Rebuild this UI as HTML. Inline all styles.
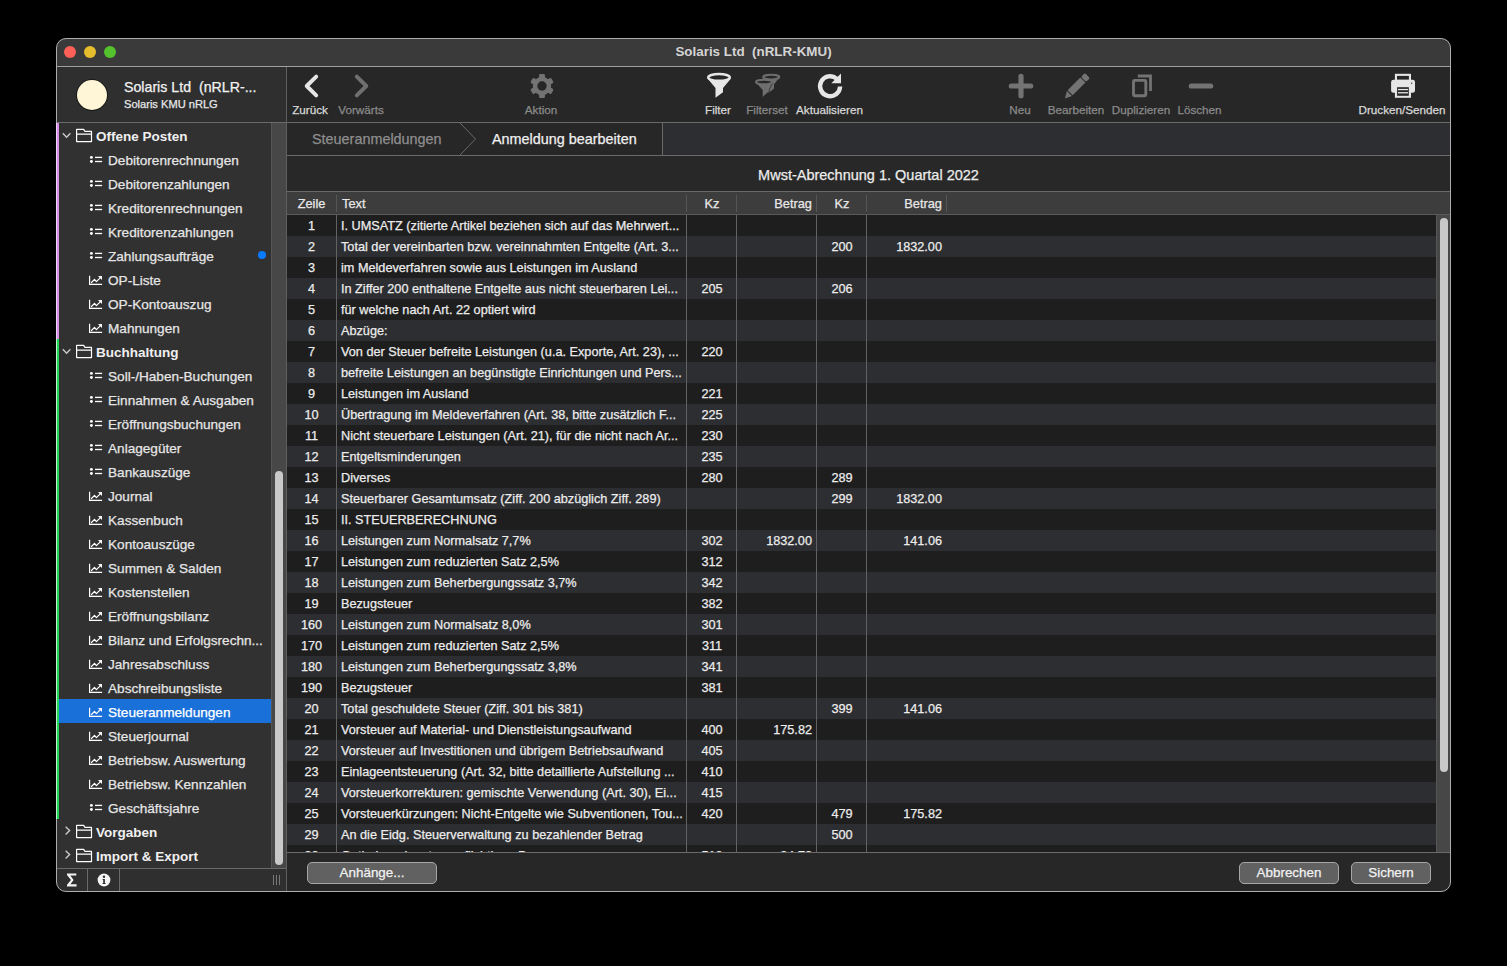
<!DOCTYPE html>
<html><head><meta charset="utf-8">
<style>
*{margin:0;padding:0;box-sizing:border-box}
html,body{width:1507px;height:966px;background:#000;overflow:hidden;font-family:"Liberation Sans",sans-serif;color:#e8e8e8}
.row,.srow .it,.th,.btn,.crumbtxt,#mtitle,.tbl,.hdrt{-webkit-text-stroke:0.25px currentColor}
.abs{position:absolute}
#win{position:absolute;left:56px;top:38px;width:1395px;height:854px;border-radius:10px;background:#2b2b2b;overflow:hidden}
#winborder{position:absolute;left:56px;top:38px;width:1395px;height:854px;border-radius:10px;border:1px solid #adadad;pointer-events:none;z-index:50}
.hl{position:absolute;height:1px;background:#6a6a6a}
.vl{position:absolute;width:1px;background:#6a6a6a}
#titlebar{left:57px;top:39px;width:1393px;height:27px;background:#3a3a3a}
.tl{position:absolute;width:12.5px;height:12.5px;border-radius:50%;top:45.6px}
#title{position:absolute;left:57px;width:1393px;top:44px;text-align:center;font-weight:bold;font-size:13.4px;color:#d4d4d4;letter-spacing:0}
#shead{left:57px;top:67px;width:229px;height:55px;background:#2f2f2f}
#toolbar{left:287px;top:67px;width:1163px;height:55px;background:#272727}
.tbl{position:absolute;top:103px;font-size:11.7px;text-align:center;width:120px;margin-left:-60px;white-space:nowrap}
#sidebar{left:57px;top:123px;width:214px;height:745px;background:#313131;overflow:hidden}
.srow{position:absolute;left:57px;width:214px;height:24px}
.srow.sel{background:#1a70d9}
.srow .ic{position:absolute;left:32px;top:7px}
.srow .it{position:absolute;left:51px;top:6px;font-size:13.6px;color:#e6e6e6;white-space:nowrap}
.srow.sel .it{color:#fff}
.srow .chev{position:absolute;left:5px;top:9px}
.srow.closed .chev{left:7px;top:7px}
.srow .fold{position:absolute;left:19px;top:5px}
.srow .gt{position:absolute;left:39px;top:6px;font-size:13.5px;font-weight:bold;color:#f0f0f0;white-space:nowrap}
#strack{left:271px;top:123px;width:15px;height:745px;background:#474747;border-left:1px solid #565656}
#sthumb{left:275px;top:471px;width:8px;height:394px;border-radius:4px;background:#c9c9c9}
#sbot{left:57px;top:869px;width:229px;height:22px;background:#2f2f2f}
#crumb{left:287px;top:123px;width:1163px;height:32px;background:#2d2e31}
#crumbA{left:287px;top:123px;width:375px;height:32px;background:#272727}
.crumbtxt{position:absolute;top:131px;font-size:14.4px;white-space:nowrap}
#titlearea{left:287px;top:156px;width:1163px;height:35px;background:#282828}
#mtitle{position:absolute;left:287px;width:1163px;top:167px;text-align:center;font-size:14.5px;color:#ececec}
#thead{left:287px;top:192px;width:1163px;height:22px;background:#3d3d3d}
.th{position:absolute;top:196px;font-size:12.8px;color:#e8e8e8;white-space:nowrap}
.thd{position:absolute;top:195px;width:1px;height:17px;background:#555}
#tbody{left:287px;top:215px;width:1149px;height:637px;overflow:hidden}
.row{position:absolute;left:0;width:1149px;height:21px;font-size:12.7px;color:#ececec;white-space:nowrap}
.rd{background:#1e1e1e}
.rl{background:#2d2e31}
.row span{position:absolute;top:4px}
.c0{left:0;width:49px;text-align:center}
.c1{left:54px}
.c2{left:400px;width:50px;text-align:center}
.c3{left:450px;width:75px;text-align:right}
.c4{left:530px;width:50px;text-align:center}
.c5{left:580px;width:75px;text-align:right}
.bd{position:absolute;top:215px;width:1px;height:637px;background:#626262}
#ttrack{left:1436px;top:215px;width:14px;height:637px;background:#474747;border-left:1px solid #565656}
#tthumb{left:1440px;top:218px;width:8px;height:554px;border-radius:4px;background:#c9c9c9}
#mbot{left:287px;top:853px;width:1163px;height:38px;background:#272727}
.btn{position:absolute;top:862px;height:22px;border-radius:5px;background:#616161;border:1px solid #a6a6a6;font-size:13.4px;color:#f2f2f2;text-align:center;line-height:19px;white-space:nowrap}
</style></head><body>
<div id="clip" style="position:absolute;left:0;top:0;width:1507px;height:966px;clip-path:inset(38px 56px 74px 56px round 10px)">
<div id="win"></div>
<!-- title bar -->
<div id="titlebar" class="abs"></div>
<div class="tl" style="left:63.8px;background:#fe5f57"></div>
<div class="tl" style="left:83.8px;background:#e6bd2c"></div>
<div class="tl" style="left:103.8px;background:#53c22d"></div>
<div id="title">Solaris Ltd&nbsp; (nRLR-KMU)</div>
<div class="hl" style="left:57px;top:66px;width:1393px;background:#a0a0a0"></div>

<!-- sidebar header -->
<div id="shead" class="abs"></div>
<div class="abs" style="left:76.75px;top:79.75px;width:30.5px;height:30.5px;border-radius:50%;background:#fef6d6;box-shadow:0 0 0 1px #1a1a1a"></div>
<div class="abs hdrt" style="left:124px;top:79px;font-size:14.2px;color:#f2f2f2;white-space:nowrap">Solaris Ltd&nbsp; (nRLR-...</div>
<div class="abs hdrt" style="left:124px;top:98px;font-size:11.1px;color:#e8e8e8;white-space:nowrap">Solaris KMU nRLG</div>

<!-- toolbar -->
<div id="toolbar" class="abs"></div>
<svg class="abs" style="left:287px;top:67px" width="1163" height="55" viewBox="287 67 1163 55">
  <!-- back -->
  <path d="M316.2 76.6L306.7 86L316.2 95.4" stroke="#e6e6e6" stroke-width="3.9" fill="none" stroke-linecap="round" stroke-linejoin="round"/>
  <path d="M356.8 76.6L366.3 86L356.8 95.4" stroke="#707070" stroke-width="3.9" fill="none" stroke-linecap="round" stroke-linejoin="round"/>
  <!-- gear -->
  <g transform="translate(542 86)" fill="#737373">
    <circle r="9.2"/>
    <rect x="-2.9" y="-11.9" width="5.8" height="23.8" rx="1.2"/>
    <rect x="-2.9" y="-11.9" width="5.8" height="23.8" rx="1.2" transform="rotate(60)"/>
    <rect x="-2.9" y="-11.9" width="5.8" height="23.8" rx="1.2" transform="rotate(120)"/>
    <circle r="4.7" fill="#272727"/>
  </g>
  <!-- filter -->
  <g>
    <path d="M707.5 78.5L715.5 88V97.8L723 92.3V88L731 78.5Z" fill="#e6e6e6"/>
    <ellipse cx="719" cy="77.4" rx="10.8" ry="3.4" stroke="#e6e6e6" stroke-width="2.4" fill="#272727"/>
  </g>
  <!-- filterset -->
  <g fill="#6e6e6e">
    <path d="M763 78L768.5 85V93L774 88.5V84.5L779.5 77Z"/>
    <ellipse cx="771.2" cy="77.1" rx="8.1" ry="2.3" stroke="#6e6e6e" stroke-width="1.9" fill="#272727"/>
    <path d="M756 83L762.3 90V97.4L769.3 91.5V89.5L772.5 83Z" stroke="#272727" stroke-width="0.7"/>
    <ellipse cx="764" cy="82" rx="8.1" ry="2.3" stroke="#6e6e6e" stroke-width="1.9" fill="#272727"/>
  </g>
  <!-- refresh -->
  <path d="M840.1 86.5A10 10 0 1 1 836.6 78.6" stroke="#e6e6e6" stroke-width="4.4" fill="none"/>
  <path d="M841 73.6V83.2H831.3Z" fill="#e6e6e6"/>
  <!-- plus -->
  <path d="M1021 76.3V95.7M1011.3 86H1030.7" stroke="#737373" stroke-width="5.2" stroke-linecap="round"/>
  <!-- pencil -->
  <g transform="translate(1076.8 86.1) rotate(-45)" fill="#737373">
    <rect x="-9.4" y="-3.6" width="18" height="7.2"/>
    <rect x="9.6" y="-3.6" width="5.4" height="7.2" rx="1.6"/>
    <path d="M-10.4 -3.6L-10.4 3.6L-17.2 0.4Z"/>
  </g>
  <!-- duplicate -->
  <path d="M1137.8 76H1150.5V91" stroke="#737373" stroke-width="2.8" fill="none"/>
  <rect x="1133.5" y="80.4" width="12.3" height="15.4" stroke="#737373" stroke-width="2.9" fill="none" rx="1"/>
  <!-- minus -->
  <path d="M1191.3 86H1210.7" stroke="#737373" stroke-width="5.2" stroke-linecap="round"/>
  <!-- printer -->
  <g fill="#e6e6e6">
    <rect x="1395.95" y="74.85" width="14" height="6" stroke="#e6e6e6" stroke-width="2.1" fill="none"/>
    <rect x="1391.1" y="79.8" width="23.9" height="13" rx="2.4"/>
    <rect x="1394.9" y="85.9" width="16.1" height="11.9" fill="#e6e6e6"/>
    <rect x="1397.1" y="87.2" width="11.7" height="8.6" fill="#272727"/>
    <rect x="1398" y="88.9" width="10" height="1.3" fill="#e6e6e6"/>
    <rect x="1398" y="92.1" width="10" height="1.3" fill="#e6e6e6"/>
    <circle cx="1411.6" cy="83.2" r="0.75" fill="#444"/>
  </g>
</svg>
<div class="tbl" style="left:310px;color:#d8d8d8">Zurück</div>
<div class="tbl" style="left:361px;color:#8a8a8a">Vorwärts</div>
<div class="tbl" style="left:541px;color:#8a8a8a">Aktion</div>
<div class="tbl" style="left:718px;color:#d8d8d8">Filter</div>
<div class="tbl" style="left:767px;color:#8a8a8a">Filterset</div>
<div class="tbl" style="left:829.5px;color:#d8d8d8">Aktualisieren</div>
<div class="tbl" style="left:1020px;color:#8a8a8a">Neu</div>
<div class="tbl" style="left:1076px;color:#8a8a8a">Bearbeiten</div>
<div class="tbl" style="left:1141px;color:#8a8a8a">Duplizieren</div>
<div class="tbl" style="left:1199.5px;color:#8a8a8a">Löschen</div>
<div class="tbl" style="left:1402px;color:#d8d8d8">Drucken/Senden</div>
<div class="hl" style="left:57px;top:122px;width:1393px;background:#6a6a6a"></div>
<div class="vl" style="left:286px;top:67px;height:824px;background:#5f5f5f"></div>

<!-- sidebar -->
<div id="sidebar" class="abs"></div>
<div class="srow grp open" style="top:123px"><svg class="chev" width="10" height="7" viewBox="0 0 10 7"><path d="M0.8 1.2L4.6 5.2L8.4 1.2" stroke="#c8c8c8" stroke-width="1.4" fill="none"/></svg><svg class="fold" width="18" height="15" viewBox="0 0 18 15"><path d="M0.6 1.4H7.6L9 3.4H15.5V13.6H0.6Z M0.6 6.2H15.5" stroke="#fff" stroke-width="1.2" fill="none" stroke-linejoin="round"/></svg><span class="gt">Offene Posten</span></div>
<div class="srow item" style="top:147px"><svg class="ic" width="16" height="12" viewBox="0 0 16 12"><circle cx="2.4" cy="3.4" r="1.45" fill="#fff"/><circle cx="2.4" cy="7.5" r="1.45" fill="#fff"/><rect x="6" y="2.75" width="7.1" height="1.3" fill="#fff"/><rect x="6" y="6.85" width="7.1" height="1.3" fill="#fff"/></svg><span class="it">Debitorenrechnungen</span></div>
<div class="srow item" style="top:171px"><svg class="ic" width="16" height="12" viewBox="0 0 16 12"><circle cx="2.4" cy="3.4" r="1.45" fill="#fff"/><circle cx="2.4" cy="7.5" r="1.45" fill="#fff"/><rect x="6" y="2.75" width="7.1" height="1.3" fill="#fff"/><rect x="6" y="6.85" width="7.1" height="1.3" fill="#fff"/></svg><span class="it">Debitorenzahlungen</span></div>
<div class="srow item" style="top:195px"><svg class="ic" width="16" height="12" viewBox="0 0 16 12"><circle cx="2.4" cy="3.4" r="1.45" fill="#fff"/><circle cx="2.4" cy="7.5" r="1.45" fill="#fff"/><rect x="6" y="2.75" width="7.1" height="1.3" fill="#fff"/><rect x="6" y="6.85" width="7.1" height="1.3" fill="#fff"/></svg><span class="it">Kreditorenrechnungen</span></div>
<div class="srow item" style="top:219px"><svg class="ic" width="16" height="12" viewBox="0 0 16 12"><circle cx="2.4" cy="3.4" r="1.45" fill="#fff"/><circle cx="2.4" cy="7.5" r="1.45" fill="#fff"/><rect x="6" y="2.75" width="7.1" height="1.3" fill="#fff"/><rect x="6" y="6.85" width="7.1" height="1.3" fill="#fff"/></svg><span class="it">Kreditorenzahlungen</span></div>
<div class="srow item" style="top:243px"><svg class="ic" width="16" height="12" viewBox="0 0 16 12"><circle cx="2.4" cy="3.4" r="1.45" fill="#fff"/><circle cx="2.4" cy="7.5" r="1.45" fill="#fff"/><rect x="6" y="2.75" width="7.1" height="1.3" fill="#fff"/><rect x="6" y="6.85" width="7.1" height="1.3" fill="#fff"/></svg><span class="it">Zahlungsaufträge</span></div>
<div class="srow item" style="top:267px"><svg class="ic" width="16" height="13" viewBox="0 0 16 13"><path d="M0.55 1.8V10.45H13.1" stroke="#fff" stroke-width="1.3" fill="none"/><path d="M2.5 8.5L5.5 5.3L7.4 7.6L11.4 3.6" stroke="#fff" stroke-width="1.2" fill="none" stroke-linecap="round" stroke-linejoin="round"/><path d="M9 2H13V6Z" fill="#fff"/></svg><span class="it">OP-Liste</span></div>
<div class="srow item" style="top:291px"><svg class="ic" width="16" height="13" viewBox="0 0 16 13"><path d="M0.55 1.8V10.45H13.1" stroke="#fff" stroke-width="1.3" fill="none"/><path d="M2.5 8.5L5.5 5.3L7.4 7.6L11.4 3.6" stroke="#fff" stroke-width="1.2" fill="none" stroke-linecap="round" stroke-linejoin="round"/><path d="M9 2H13V6Z" fill="#fff"/></svg><span class="it">OP-Kontoauszug</span></div>
<div class="srow item" style="top:315px"><svg class="ic" width="16" height="13" viewBox="0 0 16 13"><path d="M0.55 1.8V10.45H13.1" stroke="#fff" stroke-width="1.3" fill="none"/><path d="M2.5 8.5L5.5 5.3L7.4 7.6L11.4 3.6" stroke="#fff" stroke-width="1.2" fill="none" stroke-linecap="round" stroke-linejoin="round"/><path d="M9 2H13V6Z" fill="#fff"/></svg><span class="it">Mahnungen</span></div>
<div class="srow grp open" style="top:339px"><svg class="chev" width="10" height="7" viewBox="0 0 10 7"><path d="M0.8 1.2L4.6 5.2L8.4 1.2" stroke="#c8c8c8" stroke-width="1.4" fill="none"/></svg><svg class="fold" width="18" height="15" viewBox="0 0 18 15"><path d="M0.6 1.4H7.6L9 3.4H15.5V13.6H0.6Z M0.6 6.2H15.5" stroke="#fff" stroke-width="1.2" fill="none" stroke-linejoin="round"/></svg><span class="gt">Buchhaltung</span></div>
<div class="srow item" style="top:363px"><svg class="ic" width="16" height="12" viewBox="0 0 16 12"><circle cx="2.4" cy="3.4" r="1.45" fill="#fff"/><circle cx="2.4" cy="7.5" r="1.45" fill="#fff"/><rect x="6" y="2.75" width="7.1" height="1.3" fill="#fff"/><rect x="6" y="6.85" width="7.1" height="1.3" fill="#fff"/></svg><span class="it">Soll-/Haben-Buchungen</span></div>
<div class="srow item" style="top:387px"><svg class="ic" width="16" height="12" viewBox="0 0 16 12"><circle cx="2.4" cy="3.4" r="1.45" fill="#fff"/><circle cx="2.4" cy="7.5" r="1.45" fill="#fff"/><rect x="6" y="2.75" width="7.1" height="1.3" fill="#fff"/><rect x="6" y="6.85" width="7.1" height="1.3" fill="#fff"/></svg><span class="it">Einnahmen &amp; Ausgaben</span></div>
<div class="srow item" style="top:411px"><svg class="ic" width="16" height="12" viewBox="0 0 16 12"><circle cx="2.4" cy="3.4" r="1.45" fill="#fff"/><circle cx="2.4" cy="7.5" r="1.45" fill="#fff"/><rect x="6" y="2.75" width="7.1" height="1.3" fill="#fff"/><rect x="6" y="6.85" width="7.1" height="1.3" fill="#fff"/></svg><span class="it">Eröffnungsbuchungen</span></div>
<div class="srow item" style="top:435px"><svg class="ic" width="16" height="12" viewBox="0 0 16 12"><circle cx="2.4" cy="3.4" r="1.45" fill="#fff"/><circle cx="2.4" cy="7.5" r="1.45" fill="#fff"/><rect x="6" y="2.75" width="7.1" height="1.3" fill="#fff"/><rect x="6" y="6.85" width="7.1" height="1.3" fill="#fff"/></svg><span class="it">Anlagegüter</span></div>
<div class="srow item" style="top:459px"><svg class="ic" width="16" height="12" viewBox="0 0 16 12"><circle cx="2.4" cy="3.4" r="1.45" fill="#fff"/><circle cx="2.4" cy="7.5" r="1.45" fill="#fff"/><rect x="6" y="2.75" width="7.1" height="1.3" fill="#fff"/><rect x="6" y="6.85" width="7.1" height="1.3" fill="#fff"/></svg><span class="it">Bankauszüge</span></div>
<div class="srow item" style="top:483px"><svg class="ic" width="16" height="13" viewBox="0 0 16 13"><path d="M0.55 1.8V10.45H13.1" stroke="#fff" stroke-width="1.3" fill="none"/><path d="M2.5 8.5L5.5 5.3L7.4 7.6L11.4 3.6" stroke="#fff" stroke-width="1.2" fill="none" stroke-linecap="round" stroke-linejoin="round"/><path d="M9 2H13V6Z" fill="#fff"/></svg><span class="it">Journal</span></div>
<div class="srow item" style="top:507px"><svg class="ic" width="16" height="13" viewBox="0 0 16 13"><path d="M0.55 1.8V10.45H13.1" stroke="#fff" stroke-width="1.3" fill="none"/><path d="M2.5 8.5L5.5 5.3L7.4 7.6L11.4 3.6" stroke="#fff" stroke-width="1.2" fill="none" stroke-linecap="round" stroke-linejoin="round"/><path d="M9 2H13V6Z" fill="#fff"/></svg><span class="it">Kassenbuch</span></div>
<div class="srow item" style="top:531px"><svg class="ic" width="16" height="13" viewBox="0 0 16 13"><path d="M0.55 1.8V10.45H13.1" stroke="#fff" stroke-width="1.3" fill="none"/><path d="M2.5 8.5L5.5 5.3L7.4 7.6L11.4 3.6" stroke="#fff" stroke-width="1.2" fill="none" stroke-linecap="round" stroke-linejoin="round"/><path d="M9 2H13V6Z" fill="#fff"/></svg><span class="it">Kontoauszüge</span></div>
<div class="srow item" style="top:555px"><svg class="ic" width="16" height="13" viewBox="0 0 16 13"><path d="M0.55 1.8V10.45H13.1" stroke="#fff" stroke-width="1.3" fill="none"/><path d="M2.5 8.5L5.5 5.3L7.4 7.6L11.4 3.6" stroke="#fff" stroke-width="1.2" fill="none" stroke-linecap="round" stroke-linejoin="round"/><path d="M9 2H13V6Z" fill="#fff"/></svg><span class="it">Summen &amp; Salden</span></div>
<div class="srow item" style="top:579px"><svg class="ic" width="16" height="13" viewBox="0 0 16 13"><path d="M0.55 1.8V10.45H13.1" stroke="#fff" stroke-width="1.3" fill="none"/><path d="M2.5 8.5L5.5 5.3L7.4 7.6L11.4 3.6" stroke="#fff" stroke-width="1.2" fill="none" stroke-linecap="round" stroke-linejoin="round"/><path d="M9 2H13V6Z" fill="#fff"/></svg><span class="it">Kostenstellen</span></div>
<div class="srow item" style="top:603px"><svg class="ic" width="16" height="13" viewBox="0 0 16 13"><path d="M0.55 1.8V10.45H13.1" stroke="#fff" stroke-width="1.3" fill="none"/><path d="M2.5 8.5L5.5 5.3L7.4 7.6L11.4 3.6" stroke="#fff" stroke-width="1.2" fill="none" stroke-linecap="round" stroke-linejoin="round"/><path d="M9 2H13V6Z" fill="#fff"/></svg><span class="it">Eröffnungsbilanz</span></div>
<div class="srow item" style="top:627px"><svg class="ic" width="16" height="13" viewBox="0 0 16 13"><path d="M0.55 1.8V10.45H13.1" stroke="#fff" stroke-width="1.3" fill="none"/><path d="M2.5 8.5L5.5 5.3L7.4 7.6L11.4 3.6" stroke="#fff" stroke-width="1.2" fill="none" stroke-linecap="round" stroke-linejoin="round"/><path d="M9 2H13V6Z" fill="#fff"/></svg><span class="it">Bilanz und Erfolgsrechn...</span></div>
<div class="srow item" style="top:651px"><svg class="ic" width="16" height="13" viewBox="0 0 16 13"><path d="M0.55 1.8V10.45H13.1" stroke="#fff" stroke-width="1.3" fill="none"/><path d="M2.5 8.5L5.5 5.3L7.4 7.6L11.4 3.6" stroke="#fff" stroke-width="1.2" fill="none" stroke-linecap="round" stroke-linejoin="round"/><path d="M9 2H13V6Z" fill="#fff"/></svg><span class="it">Jahresabschluss</span></div>
<div class="srow item" style="top:675px"><svg class="ic" width="16" height="13" viewBox="0 0 16 13"><path d="M0.55 1.8V10.45H13.1" stroke="#fff" stroke-width="1.3" fill="none"/><path d="M2.5 8.5L5.5 5.3L7.4 7.6L11.4 3.6" stroke="#fff" stroke-width="1.2" fill="none" stroke-linecap="round" stroke-linejoin="round"/><path d="M9 2H13V6Z" fill="#fff"/></svg><span class="it">Abschreibungsliste</span></div>
<div class="srow item sel" style="top:699px"><svg class="ic" width="16" height="13" viewBox="0 0 16 13"><path d="M0.55 1.8V10.45H13.1" stroke="#fff" stroke-width="1.3" fill="none"/><path d="M2.5 8.5L5.5 5.3L7.4 7.6L11.4 3.6" stroke="#fff" stroke-width="1.2" fill="none" stroke-linecap="round" stroke-linejoin="round"/><path d="M9 2H13V6Z" fill="#fff"/></svg><span class="it">Steueranmeldungen</span></div>
<div class="srow item" style="top:723px"><svg class="ic" width="16" height="13" viewBox="0 0 16 13"><path d="M0.55 1.8V10.45H13.1" stroke="#fff" stroke-width="1.3" fill="none"/><path d="M2.5 8.5L5.5 5.3L7.4 7.6L11.4 3.6" stroke="#fff" stroke-width="1.2" fill="none" stroke-linecap="round" stroke-linejoin="round"/><path d="M9 2H13V6Z" fill="#fff"/></svg><span class="it">Steuerjournal</span></div>
<div class="srow item" style="top:747px"><svg class="ic" width="16" height="13" viewBox="0 0 16 13"><path d="M0.55 1.8V10.45H13.1" stroke="#fff" stroke-width="1.3" fill="none"/><path d="M2.5 8.5L5.5 5.3L7.4 7.6L11.4 3.6" stroke="#fff" stroke-width="1.2" fill="none" stroke-linecap="round" stroke-linejoin="round"/><path d="M9 2H13V6Z" fill="#fff"/></svg><span class="it">Betriebsw. Auswertung</span></div>
<div class="srow item" style="top:771px"><svg class="ic" width="16" height="13" viewBox="0 0 16 13"><path d="M0.55 1.8V10.45H13.1" stroke="#fff" stroke-width="1.3" fill="none"/><path d="M2.5 8.5L5.5 5.3L7.4 7.6L11.4 3.6" stroke="#fff" stroke-width="1.2" fill="none" stroke-linecap="round" stroke-linejoin="round"/><path d="M9 2H13V6Z" fill="#fff"/></svg><span class="it">Betriebsw. Kennzahlen</span></div>
<div class="srow item" style="top:795px"><svg class="ic" width="16" height="12" viewBox="0 0 16 12"><circle cx="2.4" cy="3.4" r="1.45" fill="#fff"/><circle cx="2.4" cy="7.5" r="1.45" fill="#fff"/><rect x="6" y="2.75" width="7.1" height="1.3" fill="#fff"/><rect x="6" y="6.85" width="7.1" height="1.3" fill="#fff"/></svg><span class="it">Geschäftsjahre</span></div>
<div class="srow grp closed" style="top:819px"><svg class="chev" width="8" height="10" viewBox="0 0 8 10"><path d="M1.6 0.8L5.6 4.6L1.6 8.4" stroke="#c8c8c8" stroke-width="1.4" fill="none"/></svg><svg class="fold" width="18" height="15" viewBox="0 0 18 15"><path d="M0.6 1.4H7.6L9 3.4H15.5V13.6H0.6Z M0.6 6.2H15.5" stroke="#fff" stroke-width="1.2" fill="none" stroke-linejoin="round"/></svg><span class="gt">Vorgaben</span></div>
<div class="srow grp closed" style="top:843px"><svg class="chev" width="8" height="10" viewBox="0 0 8 10"><path d="M1.6 0.8L5.6 4.6L1.6 8.4" stroke="#c8c8c8" stroke-width="1.4" fill="none"/></svg><svg class="fold" width="18" height="15" viewBox="0 0 18 15"><path d="M0.6 1.4H7.6L9 3.4H15.5V13.6H0.6Z M0.6 6.2H15.5" stroke="#fff" stroke-width="1.2" fill="none" stroke-linejoin="round"/></svg><span class="gt">Import &amp; Export</span></div>
<div class="abs" style="left:258px;top:251px;width:8px;height:8px;border-radius:50%;background:#0a7bff"></div>
<div id="strack" class="abs"></div>
<div id="sthumb" class="abs"></div>
<div class="hl" style="left:57px;top:868px;width:229px;background:#6a6a6a"></div>
<div id="sbot" class="abs"></div>
<div class="vl" style="left:87px;top:869px;height:22px;background:#6a6a6a"></div>
<div class="vl" style="left:119px;top:869px;height:22px;background:#6a6a6a"></div>
<svg class="abs" style="left:0;top:0" width="100" height="900" viewBox="0 0 100 900"><path d="M67 873.5H76.3V875.6H70.4L73.6 880L70.4 884.3H76.6V886.4H67V884.8L71 880L67 875Z" fill="#f4f4f4"/></svg>
<svg class="abs" style="left:97px;top:873px" width="14" height="14" viewBox="0 0 14 14"><circle cx="7" cy="7" r="6.4" fill="#f4f4f4"/><circle cx="7" cy="3.8" r="1.2" fill="#2f2f2f"/><path d="M5.6 6H7.9V10.2H8.7V11.1H5.4V10.2H6.2V6.9H5.6Z" fill="#2f2f2f"/></svg>
<svg class="abs" style="left:272px;top:874px" width="10" height="12" viewBox="0 0 10 12"><path d="M1.5 1V11M4.5 1V11M7.5 1V11" stroke="#777" stroke-width="1"/></svg>

<!-- breadcrumb -->
<div id="crumb" class="abs"></div>
<div id="crumbA" class="abs"></div>
<svg class="abs" style="left:287px;top:123px" width="400" height="33" viewBox="287 123 400 33">
  <path d="M460 123L475.5 139L460 155" stroke="#6a6a6a" stroke-width="1" fill="#272727"/>
  <path d="M662.5 123V155" stroke="#6a6a6a" stroke-width="1"/>
</svg>
<div class="crumbtxt" style="left:312px;color:#8e8e8e">Steueranmeldungen</div>
<div class="crumbtxt" style="left:492px;color:#f0f0f0">Anmeldung bearbeiten</div>
<div class="hl" style="left:287px;top:155px;width:1163px;background:#6a6a6a"></div>

<!-- title area -->
<div id="titlearea" class="abs"></div>
<div id="mtitle">Mwst-Abrechnung 1. Quartal 2022</div>
<div class="hl" style="left:287px;top:191px;width:1163px;background:#6a6a6a"></div>

<!-- table header -->
<div id="thead" class="abs"></div>
<div class="th" style="left:287px;width:49px;text-align:center">Zeile</div>
<div class="th" style="left:342px">Text</div>
<div class="th" style="left:687px;width:50px;text-align:center">Kz</div>
<div class="th" style="left:737px;width:75px;text-align:right">Betrag</div>
<div class="th" style="left:817px;width:50px;text-align:center">Kz</div>
<div class="th" style="left:867px;width:75px;text-align:right">Betrag</div>
<div class="thd" style="left:336px"></div>
<div class="thd" style="left:686px"></div>
<div class="thd" style="left:736px"></div>
<div class="thd" style="left:816px"></div>
<div class="thd" style="left:866px"></div>
<div class="thd" style="left:946px"></div>
<div class="hl" style="left:287px;top:214px;width:1163px;background:#5a5a5a"></div>

<!-- table body -->
<div id="tbody" class="abs">
<div class="row rd" style="top:0px"><span class="c0">1</span><span class="c1">I. UMSATZ (zitierte Artikel beziehen sich auf das Mehrwert...</span><span class="c2"></span><span class="c3"></span><span class="c4"></span><span class="c5"></span></div>
<div class="row rl" style="top:21px"><span class="c0">2</span><span class="c1">Total der vereinbarten bzw. vereinnahmten Entgelte (Art. 3...</span><span class="c2"></span><span class="c3"></span><span class="c4">200</span><span class="c5">1832.00</span></div>
<div class="row rd" style="top:42px"><span class="c0">3</span><span class="c1">im Meldeverfahren sowie aus Leistungen im Ausland</span><span class="c2"></span><span class="c3"></span><span class="c4"></span><span class="c5"></span></div>
<div class="row rl" style="top:63px"><span class="c0">4</span><span class="c1">In Ziffer 200 enthaltene Entgelte aus nicht steuerbaren Lei...</span><span class="c2">205</span><span class="c3"></span><span class="c4">206</span><span class="c5"></span></div>
<div class="row rd" style="top:84px"><span class="c0">5</span><span class="c1">für welche nach Art. 22 optiert wird</span><span class="c2"></span><span class="c3"></span><span class="c4"></span><span class="c5"></span></div>
<div class="row rl" style="top:105px"><span class="c0">6</span><span class="c1">Abzüge:</span><span class="c2"></span><span class="c3"></span><span class="c4"></span><span class="c5"></span></div>
<div class="row rd" style="top:126px"><span class="c0">7</span><span class="c1">Von der Steuer befreite Leistungen (u.a. Exporte, Art. 23), ...</span><span class="c2">220</span><span class="c3"></span><span class="c4"></span><span class="c5"></span></div>
<div class="row rl" style="top:147px"><span class="c0">8</span><span class="c1">befreite Leistungen an begünstigte Einrichtungen und Pers...</span><span class="c2"></span><span class="c3"></span><span class="c4"></span><span class="c5"></span></div>
<div class="row rd" style="top:168px"><span class="c0">9</span><span class="c1">Leistungen im Ausland</span><span class="c2">221</span><span class="c3"></span><span class="c4"></span><span class="c5"></span></div>
<div class="row rl" style="top:189px"><span class="c0">10</span><span class="c1">Übertragung im Meldeverfahren (Art. 38, bitte zusätzlich F...</span><span class="c2">225</span><span class="c3"></span><span class="c4"></span><span class="c5"></span></div>
<div class="row rd" style="top:210px"><span class="c0">11</span><span class="c1">Nicht steuerbare Leistungen (Art. 21), für die nicht nach Ar...</span><span class="c2">230</span><span class="c3"></span><span class="c4"></span><span class="c5"></span></div>
<div class="row rl" style="top:231px"><span class="c0">12</span><span class="c1">Entgeltsminderungen</span><span class="c2">235</span><span class="c3"></span><span class="c4"></span><span class="c5"></span></div>
<div class="row rd" style="top:252px"><span class="c0">13</span><span class="c1">Diverses</span><span class="c2">280</span><span class="c3"></span><span class="c4">289</span><span class="c5"></span></div>
<div class="row rl" style="top:273px"><span class="c0">14</span><span class="c1">Steuerbarer Gesamtumsatz (Ziff. 200 abzüglich Ziff. 289)</span><span class="c2"></span><span class="c3"></span><span class="c4">299</span><span class="c5">1832.00</span></div>
<div class="row rd" style="top:294px"><span class="c0">15</span><span class="c1">II. STEUERBERECHNUNG</span><span class="c2"></span><span class="c3"></span><span class="c4"></span><span class="c5"></span></div>
<div class="row rl" style="top:315px"><span class="c0">16</span><span class="c1">Leistungen zum Normalsatz 7,7%</span><span class="c2">302</span><span class="c3">1832.00</span><span class="c4"></span><span class="c5">141.06</span></div>
<div class="row rd" style="top:336px"><span class="c0">17</span><span class="c1">Leistungen zum reduzierten Satz 2,5%</span><span class="c2">312</span><span class="c3"></span><span class="c4"></span><span class="c5"></span></div>
<div class="row rl" style="top:357px"><span class="c0">18</span><span class="c1">Leistungen zum Beherbergungssatz 3,7%</span><span class="c2">342</span><span class="c3"></span><span class="c4"></span><span class="c5"></span></div>
<div class="row rd" style="top:378px"><span class="c0">19</span><span class="c1">Bezugsteuer</span><span class="c2">382</span><span class="c3"></span><span class="c4"></span><span class="c5"></span></div>
<div class="row rl" style="top:399px"><span class="c0">160</span><span class="c1">Leistungen zum Normalsatz 8,0%</span><span class="c2">301</span><span class="c3"></span><span class="c4"></span><span class="c5"></span></div>
<div class="row rd" style="top:420px"><span class="c0">170</span><span class="c1">Leistungen zum reduzierten Satz 2,5%</span><span class="c2">311</span><span class="c3"></span><span class="c4"></span><span class="c5"></span></div>
<div class="row rl" style="top:441px"><span class="c0">180</span><span class="c1">Leistungen zum Beherbergungssatz 3,8%</span><span class="c2">341</span><span class="c3"></span><span class="c4"></span><span class="c5"></span></div>
<div class="row rd" style="top:462px"><span class="c0">190</span><span class="c1">Bezugsteuer</span><span class="c2">381</span><span class="c3"></span><span class="c4"></span><span class="c5"></span></div>
<div class="row rl" style="top:483px"><span class="c0">20</span><span class="c1">Total geschuldete Steuer (Ziff. 301 bis 381)</span><span class="c2"></span><span class="c3"></span><span class="c4">399</span><span class="c5">141.06</span></div>
<div class="row rd" style="top:504px"><span class="c0">21</span><span class="c1">Vorsteuer auf Material- und Dienstleistungsaufwand</span><span class="c2">400</span><span class="c3">175.82</span><span class="c4"></span><span class="c5"></span></div>
<div class="row rl" style="top:525px"><span class="c0">22</span><span class="c1">Vorsteuer auf Investitionen und übrigem Betriebsaufwand</span><span class="c2">405</span><span class="c3"></span><span class="c4"></span><span class="c5"></span></div>
<div class="row rd" style="top:546px"><span class="c0">23</span><span class="c1">Einlageentsteuerung (Art. 32, bitte detaillierte Aufstellung ...</span><span class="c2">410</span><span class="c3"></span><span class="c4"></span><span class="c5"></span></div>
<div class="row rl" style="top:567px"><span class="c0">24</span><span class="c1">Vorsteuerkorrekturen: gemischte Verwendung (Art. 30), Ei...</span><span class="c2">415</span><span class="c3"></span><span class="c4"></span><span class="c5"></span></div>
<div class="row rd" style="top:588px"><span class="c0">25</span><span class="c1">Vorsteuerkürzungen: Nicht-Entgelte wie Subventionen, Tou...</span><span class="c2">420</span><span class="c3"></span><span class="c4">479</span><span class="c5">175.82</span></div>
<div class="row rl" style="top:609px"><span class="c0">29</span><span class="c1">An die Eidg. Steuerverwaltung zu bezahlender Betrag</span><span class="c2"></span><span class="c3"></span><span class="c4">500</span><span class="c5"></span></div>
<div class="row rd" style="top:630px"><span class="c0">30</span><span class="c1">Guthaben der steuerpflichtigen Person</span><span class="c2">510</span><span class="c3">34.72</span><span class="c4"></span><span class="c5"></span></div>
</div>
<div class="bd" style="left:336px"></div>
<div class="bd" style="left:686px"></div>
<div class="bd" style="left:736px"></div>
<div class="bd" style="left:816px"></div>
<div class="bd" style="left:866px"></div>
<div id="ttrack" class="abs"></div>
<div id="tthumb" class="abs"></div>
<div class="hl" style="left:287px;top:852px;width:1163px;background:#6a6a6a"></div>

<!-- bottom bar -->
<div id="mbot" class="abs"></div>
<div class="btn" style="left:307px;width:130px">Anhänge...</div>
<div class="btn" style="left:1239px;width:100px">Abbrechen</div>
<div class="btn" style="left:1351px;width:80px">Sichern</div>

</div>
<div id="winborder"></div>
<div class="abs" style="left:56px;top:123px;width:3px;height:216px;background:linear-gradient(to right,#f0d4f7 1px,#d98fe9 1px);z-index:60"></div>
<div class="abs" style="left:56px;top:339px;width:3px;height:480px;background:linear-gradient(to right,#c4f2cf 1px,#1fd657 1px);z-index:60"></div>

</body></html>
